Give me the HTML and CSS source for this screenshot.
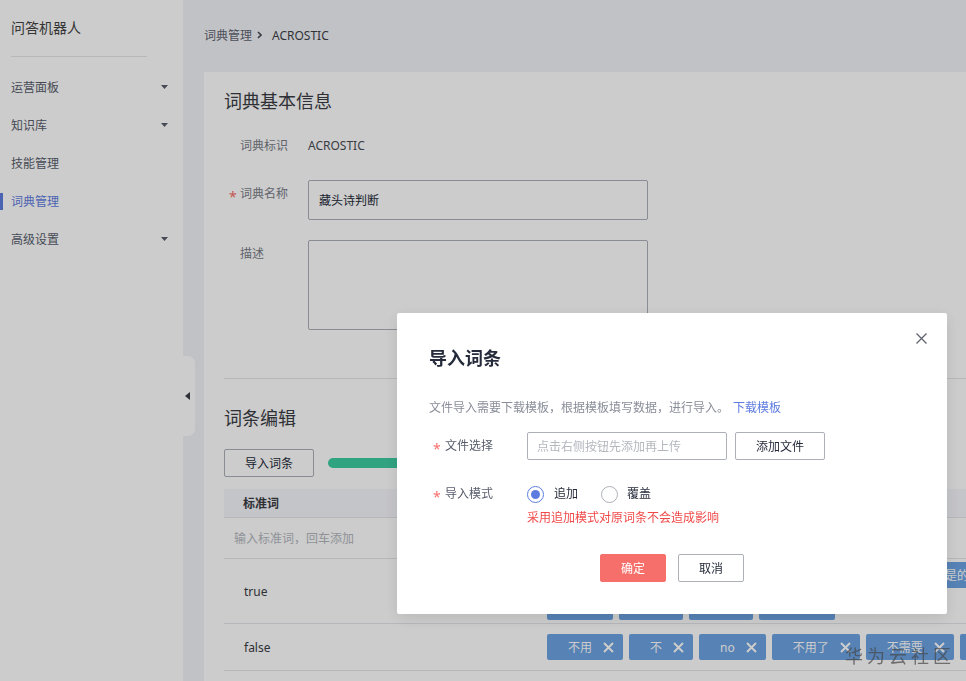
FILE: index.html
```html
<!DOCTYPE html>
<html lang="zh-CN">
  <head>
    <meta charset="UTF-8" />
    <meta name="viewport" content="width=device-width, initial-scale=1.0" />
    <title>词典管理 | 问答机器人</title>
    <link rel="stylesheet" href="styles.css">
  </head>
  <body>
    <div class="layout">
      <aside class="sidebar">
        <div class="brand">问答机器人</div>
        <ul class="menu">
          <li class="menu-item">运营面板
            <svg class="caret" width="7" height="4" viewBox="0 0 7 4"><path d="M0 0h7L3.5 4z" /></svg>
          </li>
          <li class="menu-item">知识库
            <svg class="caret" width="7" height="4" viewBox="0 0 7 4"><path d="M0 0h7L3.5 4z" /></svg>
          </li>
          <li class="menu-item">技能管理</li>
          <li class="menu-item active">词典管理</li>
          <li class="menu-item">高级设置
            <svg class="caret" width="7" height="4" viewBox="0 0 7 4"><path d="M0 0h7L3.5 4z" /></svg>
          </li>
        </ul>
      </aside>

      <div class="collapse-handle">
        <svg width="5" height="8" viewBox="0 0 5 8"><path d="M5 0v8L0 4z" fill="#3a3d44" /></svg>
      </div>

      <main class="content">
        <div class="crumb">
          <span class="crumb-link">词典管理</span>
          <svg class="crumb-sep" width="5" height="8" viewBox="0 0 5 8"><path d="M1 1l3 3-3 3" /></svg>
          <span class="crumb-current">ACROSTIC</span>
        </div>

        <section class="card">
          <h2 class="card-title">词典基本信息</h2>
          <div class="form">
            <div class="form-row static">
              <label class="form-label">词典标识</label>
              <div class="form-value">ACROSTIC</div>
            </div>
            <div class="form-row">
              <label class="form-label required">词典名称</label>
              <input class="text-input" type="text" value="藏头诗判断" />
            </div>
            <div class="form-row">
              <label class="form-label">描述</label>
              <textarea class="text-area"></textarea>
            </div>
          </div>

          <div class="divider"></div>

          <h2 class="card-title section-title">词条编辑</h2>
          <div class="toolbar">
            <button class="btn">导入词条</button>
            <div class="progress"></div>
          </div>

          <div class="table">
            <div class="tr th">
              <div class="td col-word">标准词</div>
              <div class="td">同义词</div>
            </div>
            <div class="tr add-row">
              <input class="add-input" type="text" placeholder="输入标准词，回车添加" />
            </div>
            <div class="tr row-true">
              <div class="td col-word">true</div>
              <div class="td tag-cell">
                <div class="tag-line">
                  <span class="tag">好的 <svg class="tag-x" width="11" height="11" viewBox="0 0 11 11"><path d="M1 1l9 9M10 1l-9 9" /></svg></span>
                  <span class="tag">是 <svg class="tag-x" width="11" height="11" viewBox="0 0 11 11"><path d="M1 1l9 9M10 1l-9 9" /></svg></span>
                  <span class="tag">对 <svg class="tag-x" width="11" height="11" viewBox="0 0 11 11"><path d="M1 1l9 9M10 1l-9 9" /></svg></span>
                  <span class="tag">嗯 <svg class="tag-x" width="11" height="11" viewBox="0 0 11 11"><path d="M1 1l9 9M10 1l-9 9" /></svg></span>
                  <span class="tag">yeah <svg class="tag-x" width="11" height="11" viewBox="0 0 11 11"><path d="M1 1l9 9M10 1l-9 9" /></svg></span>
                  <span class="tag">是的 <svg class="tag-x" width="11" height="11" viewBox="0 0 11 11"><path d="M1 1l9 9M10 1l-9 9" /></svg></span>
                </div>
                <div class="tag-line">
                  <span class="tag">ok <svg class="tag-x" width="11" height="11" viewBox="0 0 11 11"><path d="M1 1l9 9M10 1l-9 9" /></svg></span>
                  <span class="tag">行 <svg class="tag-x" width="11" height="11" viewBox="0 0 11 11"><path d="M1 1l9 9M10 1l-9 9" /></svg></span>
                  <span class="tag">要 <svg class="tag-x" width="11" height="11" viewBox="0 0 11 11"><path d="M1 1l9 9M10 1l-9 9" /></svg></span>
                  <span class="tag">可以 <svg class="tag-x" width="11" height="11" viewBox="0 0 11 11"><path d="M1 1l9 9M10 1l-9 9" /></svg></span>
                </div>
              </div>
            </div>
            <div class="tr row-false">
              <div class="td col-word">false</div>
              <div class="td tag-cell">
                <div class="tag-line">
                  <span class="tag">不用 <svg class="tag-x" width="11" height="11" viewBox="0 0 11 11"><path d="M1 1l9 9M10 1l-9 9" /></svg></span>
                  <span class="tag">不 <svg class="tag-x" width="11" height="11" viewBox="0 0 11 11"><path d="M1 1l9 9M10 1l-9 9" /></svg></span>
                  <span class="tag">no <svg class="tag-x" width="11" height="11" viewBox="0 0 11 11"><path d="M1 1l9 9M10 1l-9 9" /></svg></span>
                  <span class="tag">不用了 <svg class="tag-x" width="11" height="11" viewBox="0 0 11 11"><path d="M1 1l9 9M10 1l-9 9" /></svg></span>
                  <span class="tag">不需要 <svg class="tag-x" width="11" height="11" viewBox="0 0 11 11"><path d="M1 1l9 9M10 1l-9 9" /></svg></span>
                  <span class="tag">否 <svg class="tag-x" width="11" height="11" viewBox="0 0 11 11"><path d="M1 1l9 9M10 1l-9 9" /></svg></span>
                </div>
              </div>
            </div>
          </div>
        </section>
      </main>
    </div>

    <div class="mask"></div>
    <div class="watermark">华为云社区</div>

    <div class="modal">
      <svg class="modal-close" width="11" height="11" viewBox="0 0 11 11"><path d="M0.5 0.5l10 10M10.5 0.5l-10 10" /></svg>
      <h3 class="modal-title">导入词条</h3>
      <p class="modal-tip">文件导入需要下载模板，根据模板填写数据，进行导入。<a class="link">下载模板</a></p>
      <div class="m-form">
        <div class="m-row">
          <label class="m-label required">文件选择</label>
          <input class="file-input" type="text" placeholder="点击右侧按钮先添加再上传" />
          <button class="btn file-btn">添加文件</button>
        </div>
        <div class="m-row mode-row">
          <label class="m-label required">导入模式</label>
          <span class="radio checked"><i class="radio-dot"></i>追加</span>
          <span class="radio"><i class="radio-dot"></i>覆盖</span>
        </div>
        <p class="m-error">采用追加模式对原词条不会造成影响</p>
      </div>
      <div class="m-footer">
        <button class="btn btn-danger">确定</button>
        <button class="btn btn-plain">取消</button>
      </div>
    </div>
  </body>
</html>
```

FILE: styles.css
```css
* {
  margin: 0;
  padding: 0;
  box-sizing: border-box;
}

body {
  font-family: "Noto Sans", "Noto Sans CJK SC", sans-serif;
  font-size: 12px;
  color: #575d6c;
  background-color: #f2f3f8;
  height: 100vh;
  overflow: hidden;
}

.layout {
  display: flex;
  height: 100vh;
}

/* sidebar */
.sidebar {
  width: 183px;
  flex-shrink: 0;
  background-color: #fff;
}

.brand {
  height: 57px;
  line-height: 56px;
  margin: 0 36px 0 11px;
  font-size: 14px;
  color: #444;
  border-bottom: 1px solid #e6e6e6;
}

.menu {
  list-style: none;
  padding-top: 11px;
}

.menu-item {
  position: relative;
  height: 38px;
  display: flex;
  align-items: center;
  justify-content: space-between;
  padding: 0 15px 0 11px;
  color: #575d6c;
}

.menu-item.active {
  color: #5e7ce0;
}

.menu-item.active::before {
  content: "";
  position: absolute;
  left: 0;
  top: 11px;
  width: 3px;
  height: 17px;
  background: #5e7ce0;
}

.caret path {
  fill: #575d6c;
}

.collapse-handle {
  position: absolute;
  left: 183px;
  top: 356px;
  width: 12px;
  height: 80px;
  background: #fff;
  border-radius: 0 7px 7px 0;
  display: flex;
  align-items: center;
  justify-content: center;
  padding-right: 3px;
}

/* main */
.content {
  flex: 1;
  min-width: 0;
  overflow: hidden;
  padding-left: 21px;
}

.crumb {
  height: 72px;
  padding-bottom: 2px;
  display: flex;
  align-items: center;
}

.crumb-link {
  color: #5f6470;
}

.crumb-sep {
  margin: 0 10px 0 5px;
}

.crumb-sep path {
  fill: none;
  stroke: #4a4d55;
  stroke-width: 1.6;
}

.crumb-current {
  color: #3c3f46;
}

.card {
  width: 900px;
  min-height: calc(100vh - 72px);
  background: #fff;
  padding: 17px 0 0 20px;
}

.card-title {
  font-size: 18px;
  font-weight: normal;
  line-height: 24px;
  color: #3a3d44;
}

.form {
  margin-top: 23px;
}

.form-row {
  display: flex;
  align-items: flex-start;
  margin-bottom: 20px;
}

.form-row.static {
  margin-bottom: 24px;
}

.form-row:last-child {
  margin-bottom: 0;
}

.form-label {
  position: relative;
  width: 84px;
  flex-shrink: 0;
  padding: 4px 0 0 16px;
  line-height: 20px;
  color: #7a7e88;
}

.form-row.static .form-label {
  padding-top: 0;
}

.required::before {
  content: "*";
  position: absolute;
  left: 5px;
  top: 7px;
  font-size: 14px;
  line-height: 20px;
  color: #f66f6a;
}

.form-value {
  line-height: 20px;
  color: #4a4d55;
}

.text-input {
  width: 340px;
  height: 40px;
  padding: 0 10px;
  border: 1px solid #adb0b8;
  border-radius: 2px;
  font: inherit;
  color: #252b3a;
  background: #fff;
}

.text-area {
  width: 340px;
  height: 90px;
  border: 1px solid #adb0b8;
  border-radius: 2px;
  resize: none;
  background: #fff;
}

.divider {
  height: 1px;
  margin-top: 48px;
  background: #e3e5e9;
}

.section-title {
  margin-top: 27px;
}

.toolbar {
  display: flex;
  align-items: center;
  margin-top: 19px;
}

.btn {
  height: 28px;
  width: 90px;
  border: 1px solid #adb0b8;
  border-radius: 2px;
  background: #fff;
  font: inherit;
  color: #252b3a;
  cursor: pointer;
}

.progress {
  width: 300px;
  height: 10px;
  margin-left: 14px;
  border-radius: 5px;
  background: #3dcca2;
}

.table {
  margin-top: 12px;
}

.tr {
  display: flex;
  align-items: center;
  border-bottom: 1px solid #e3e5e9;
}

.th {
  height: 29px;
  background: #f6f7fb;
  font-weight: bold;
  color: #3a3d44;
}

.th .col-word {
  padding-left: 19px;
}

.col-word {
  width: 323px;
  flex-shrink: 0;
  padding-left: 20px;
  color: #3a3d44;
}

.add-row {
  height: 41px;
}

.add-input {
  width: 100%;
  height: 100%;
  border: none;
  padding-left: 10px;
  font: inherit;
  background: transparent;
}

.add-input::placeholder {
  color: #b4b7be;
}

.row-true {
  height: 65px;
}

.row-false {
  height: 47px;
}

.tag-cell {
  display: flex;
  flex-direction: column;
  gap: 6px;
}

.tag-line {
  display: flex;
  gap: 6px;
}

.tag {
  height: 26px;
  display: inline-flex;
  align-items: center;
  gap: 11px;
  padding: 0 9px 0 21px;
  background: #6ca3e3;
  color: #fff;
  border-radius: 2px;
  white-space: nowrap;
}

.tag-x path {
  stroke: #fff;
  stroke-width: 2;
}

/* overlay */
.mask {
  position: fixed;
  inset: 0;
  background: rgba(0, 0, 0, 0.2);
}

.watermark {
  position: fixed;
  left: 845px;
  top: 642px;
  font-size: 18px;
  letter-spacing: 4px;
  color: rgba(70, 70, 70, 0.7);
  font-family: "Noto Sans CJK SC", sans-serif;
}

.modal {
  position: fixed;
  left: 397px;
  top: 313px;
  width: 550px;
  height: 301px;
  background: #fff;
  border-radius: 2px;
  padding: 33px 32px 0;
  box-shadow: 0 4px 16px rgba(0, 0, 0, 0.1);
}

.modal-close {
  position: absolute;
  top: 20px;
  right: 20px;
}

.modal-close path {
  stroke: #5f6470;
  stroke-width: 1.3;
}

.modal-title {
  font-size: 18px;
  line-height: 24px;
  font-weight: bold;
  color: #252b3a;
}

.modal-tip {
  margin-top: 29px;
  line-height: 18px;
  color: #8a8e99;
}

.link {
  margin-left: 4px;
  color: #5e7ce0;
}

.m-form {
  margin-top: 15px;
}

.m-row {
  display: flex;
  align-items: center;
}

.m-label {
  position: relative;
  width: 98px;
  flex-shrink: 0;
  padding-left: 16px;
  line-height: 20px;
  color: #575d6c;
}

.m-label.required::before {
  left: 4px;
  top: 3px;
}

.file-input {
  width: 200px;
  height: 28px;
  padding: 0 9px;
  border: 1px solid #adb0b8;
  border-radius: 2px;
  font: inherit;
}

.file-input::placeholder {
  color: #b4b7be;
}

.file-btn {
  margin-left: 8px;
}

.mode-row {
  margin-top: 24px;
  line-height: 20px;
}

.radio {
  display: inline-flex;
  align-items: center;
  gap: 10px;
  color: #252b3a;
  margin-right: 23px;
}

.radio + .radio {
  margin-right: 0;
}

.radio-dot {
  width: 17px;
  height: 17px;
  border: 1px solid #adb0b8;
  border-radius: 50%;
  display: flex;
  align-items: center;
  justify-content: center;
}

.radio.checked .radio-dot {
  border-color: #5e7ce0;
}

.radio.checked .radio-dot::after {
  content: "";
  width: 9px;
  height: 9px;
  border-radius: 50%;
  background: #5e7ce0;
}

.radio + .radio .radio-dot {
  margin-right: -1px;
}

.m-error {
  margin: 5px 0 0 98px;
  line-height: 18px;
  color: #f04848;
}

.m-footer {
  display: flex;
  justify-content: center;
  gap: 12px;
  margin-top: 27px;
}

.m-footer .btn {
  width: 66px;
}

.btn-danger {
  background: #f66f6a;
  border-color: #f66f6a;
  color: #fff;
}
```
